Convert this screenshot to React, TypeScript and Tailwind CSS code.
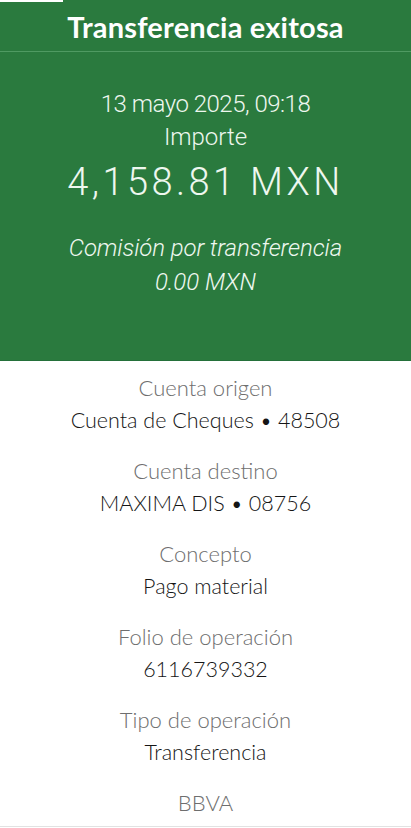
import React from 'react';

const rows = [
  { label: 'Cuenta origen', value: 'Cuenta de Cheques • 48508' },
  { label: 'Cuenta destino', value: 'MAXIMA DIS • 08756' },
  { label: 'Concepto', value: 'Pago material' },
  { label: 'Folio de operación', value: '6116739332' },
  { label: 'Tipo de operación', value: 'Transferencia' },
];

export default function App() {
  return (
    <div className="w-[411px] h-[828px] bg-white overflow-hidden font-['Lato',sans-serif]">
      <div className="relative bg-[#2a7a3e] h-[361px] border-b border-[#24703a]">
        <div className="absolute left-0 top-0 w-[63px] h-[2px] bg-white" />
        <div className="h-[52px] pt-[12px] text-center border-b border-[#4f9a62]">
          <h1 className="text-white font-bold text-[29px] leading-[29px] tracking-[0.2px]">Transferencia exitosa</h1>
        </div>
        <div className="flex flex-col items-center text-[#eef7ef] font-['Roboto',sans-serif] font-light pt-[37px]">
          <p className="text-[24px] leading-[30px] tracking-[-0.5px]">13 mayo 2025, 09:18</p>
          <p className="text-[24px] leading-[30px] mt-[3px]">Importe</p>
          <p className="text-[38px] leading-[44px] tracking-[3.4px] mt-[8px]">4,158.81 MXN</p>
          <p className="text-[24px] leading-[30px] italic tracking-[-0.1px] mt-[29px]">Comisión por transferencia</p>
          <p className="text-[24px] leading-[30px] italic mt-[4px]">0.00 MXN</p>
        </div>
      </div>
      <div className="flex flex-col items-center pt-[10px]">
        {rows.map((r) => (
          <div key={r.label} className="flex flex-col items-center h-[83px]">
            <p className="text-[22px] leading-[33px] font-light text-[#6e6e6e]">{r.label}</p>
            <p className="text-[21.5px] leading-[33px] font-light text-[#151515]">{r.value}</p>
          </div>
        ))}
        <p className="text-[22px] leading-[33px] font-light text-[#6e6e6e]">BBVA</p>
      </div>
      <div className="border-b border-[#e2e2e2] mt-[7px]" />
    </div>
  );
}
